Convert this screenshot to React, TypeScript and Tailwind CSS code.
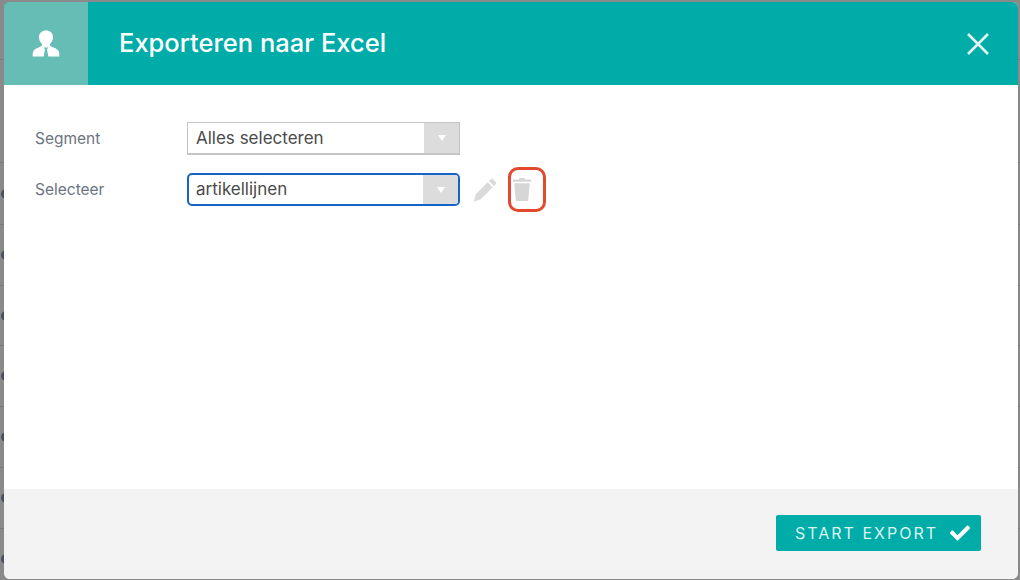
import { FaCheck } from "react-icons/fa";

const backRows = [60, 103, 62, 61, 60, 61, 61, 61, 61];

function PersonIcon() {
  return (
    <svg viewBox="0 0 28 28" className="h-[28px] w-[28px]" fill="white">
      <path d="M14 .5c3.900 0 7 2.600 7 6.500 0 3.200-1.400 5.500-3.200 7.300 0 1 .5 1.700 1.500 2.300 2.600 1.200 6 2.300 7.200 4.200.6 1.200.9 3.200.9 5.700H16.300l-1.300-7 1.200-2h-4.400l1.200 2-1.300 7H.6c0-2.500.3-4.500.9-5.700 1.200-1.900 4.600-3 7.200-4.200 1-.6 1.500-1.300 1.500-2.300C8.400 12.500 7 10.200 7 7c0-3.900 3.100-6.500 7-6.500z" />
    </svg>
  );
}

function PencilIcon() {
  return (
    <svg viewBox="0 0 24 24" className="h-[24px] w-[24px]" fill="#dadada">
      <path d="M17.800 1.200c.6-.6 1.500-.6 2.100 0l2.900 2.900c.6.6.6 1.500 0 2.100l-1.900 1.900-5-5 1.900-1.900zM14.700 4.300l5 5L7.500 21.500 1 23.500l1.500-7z" />
    </svg>
  );
}

function TrashIcon() {
  return (
    <svg viewBox="0 0 18 23" className="h-[23px] w-[18px]" fill="#d6d6d6">
      <path d="M6.500 0h5l.7 1.500H18v2.300H0V1.500h5.800zM1.200 5.200h15.600l-1.500 16.600c-.1.800-.5 1.200-1.200 1.200H3.900c-.7 0-1.100-.4-1.200-1.200z" />
    </svg>
  );
}

function SelectBox({ value, focused }: { value: string; focused?: boolean }) {
  return (
    <div
      className={`flex h-[33px] w-[273px] items-stretch overflow-hidden bg-white ${
        focused
          ? "rounded-[5px] border-[2.500px] border-[#1565c8]"
          : "border border-b-2 border-[#c4c4c4]"
      }`}
    >
      <span
        className={`flex flex-1 items-center text-[17px] text-[#4a4a4a] ${
          focused ? "pl-[7px]" : "pt-[1px] pl-[8px]"
        }`}
      >
        {value}
      </span>
      <span className="flex w-[35px] items-center justify-center bg-[#dcdcdc]">
        <span className="h-0 w-0 border-x-[4px] border-t-[6px] border-x-transparent border-t-white" />
      </span>
    </div>
  );
}

export default function App() {
  return (
    <div className="relative h-[580px] w-[1020px] overflow-hidden bg-[#8a8a8a] font-['Inter',sans-serif]">
      <div className="flex flex-col">
        {backRows.map((height, i) => (
          <div
            key={i}
            style={{ height }}
            className="flex items-center border-b border-[#7a7a7a]"
          >
            {i > 1 && (
              <span className="ml-[1px] h-[10px] w-[10px] rounded-full bg-[#4a505c]" />
            )}
          </div>
        ))}
      </div>

      <div className="absolute top-[2px] left-[4px] flex h-[577px] w-[1014px] flex-col overflow-hidden rounded-[6px] bg-white">
        <header className="flex h-[83px] shrink-0 items-center bg-[#00aca8]">
          <div className="flex h-full w-[84px] items-center justify-center bg-[#65bdb6]">
            <PersonIcon />
          </div>
          <h1 className="ml-[31px] flex-1 text-[25.500px] font-medium text-white">
            Exporteren naar Excel
          </h1>
          <svg
            viewBox="0 0 22 22"
            className="mr-[29px] h-[22px] w-[22px]"
            stroke="#e3f5f4"
            strokeWidth="2.600"
            fill="none"
          >
            <path d="M1 1l20 20M21 1L1 21" />
          </svg>
        </header>

        <div className="flex flex-1 flex-col gap-[12px] pt-[37px] pl-[31px]">
          <div className="flex items-center">
            <label className="w-[152px] text-[15.500px] text-[#6b7480]">Segment</label>
            <SelectBox value="Alles selecteren" />
          </div>
          <div className="flex items-center">
            <label className="w-[152px] text-[15.500px] text-[#6b7480]">Selecteer</label>
            <SelectBox value="artikellijnen" focused />
            <span className="ml-[13px] flex">
              <PencilIcon />
            </span>
            <span className="ml-[11px] flex h-[45px] w-[38px] items-center rounded-[10px] border-[3px] border-[#e2492f] pl-[2px]">
              <TrashIcon />
            </span>
          </div>
        </div>

        <footer className="flex h-[90px] shrink-0 items-start justify-end bg-[#f3f3f3] pt-[26px] pr-[37px]">
          <button className="flex h-[36px] w-[205px] items-center gap-[12px] rounded-[2px] bg-[#00aca8] pl-[19px] text-[16px] tracking-[2px] text-[#d9f3f1]">
            START EXPORT
            <FaCheck size={20} className="text-white" />
          </button>
        </footer>
      </div>
    </div>
  );
}
